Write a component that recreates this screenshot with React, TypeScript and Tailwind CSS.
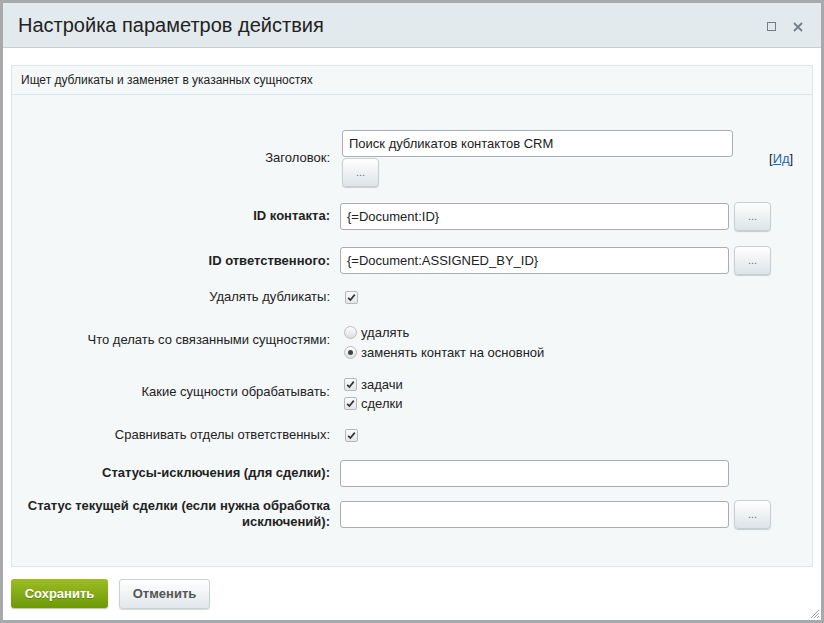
import React from "react";

const font = { fontFamily: '"Liberation Sans", Arial, sans-serif' };

function DotsButton() {
  return (
    <button
      type="button"
      className="h-[29px] w-[37px] shrink-0 rounded-[4px] border border-[#c6cfd3] bg-gradient-to-b from-[#ffffff] to-[#dde4e7] text-[11px] leading-none text-[#6b7378] shadow-[0_1px_1px_rgba(0,0,0,0.18)]"
    >
      ...
    </button>
  );
}

function TextInput({ value, width = "w-[389px]" }: { value?: string; width?: string }) {
  return (
    <div
      className={`h-[27px] ${width} shrink-0 rounded-[3px] border border-[#a9aeb1] bg-white pl-[6px] text-[13px] leading-[25px] text-[#222]`}
    >
      {value}
    </div>
  );
}

function Check() {
  return (
    <span className="inline-flex h-[13px] w-[13px] shrink-0 items-center justify-center rounded-[2px] border border-[#b5b9bc] bg-gradient-to-b from-[#fbfbfb] to-[#e4e6e7]">
      <svg width="9" height="9" viewBox="0 0 9 9">
        <path d="M1.2 4.8 L3.4 7 L7.8 1.6" fill="none" stroke="#333" strokeWidth="1.7" />
      </svg>
    </span>
  );
}

function Radio({ checked }: { checked?: boolean }) {
  return (
    <span className="inline-flex h-[13px] w-[13px] shrink-0 items-center justify-center rounded-full border border-[#b8bcbf] bg-gradient-to-b from-[#fdfdfd] to-[#dcdfe1]">
      {checked && <span className="h-[5px] w-[5px] rounded-full bg-[#444]" />}
    </span>
  );
}

function Row({
  label,
  bold,
  h,
  children,
}: {
  label: React.ReactNode;
  bold?: boolean;
  h: string;
  children: React.ReactNode;
}) {
  return (
    <div className={`flex ${h} items-center`}>
      <div
        className={`w-[319px] shrink-0 pr-[1px] text-right text-[13px] leading-[16px] text-[#222] ${bold ? "font-bold" : ""}`}
      >
        {label}
      </div>
      <div className="flex items-center gap-[5px] pl-[9px]">{children}</div>
    </div>
  );
}

export default function App() {
  return (
    <div
      style={font}
      className="relative flex h-[623px] w-[824px] flex-col border-[3px] border-[#a7a9ab] bg-white"
    >
      <div className="flex h-[45px] shrink-0 items-center justify-between border-b border-[#c9d0d4] bg-[#e3eaee] pl-[15px] pr-[18px]">
        <h1 className="text-[20px] leading-none text-[#222]">Настройка параметров действия</h1>
        <div className="flex items-center gap-[17px] pt-[3px]">
          <span className="block h-[9px] w-[9px] border-[1.5px] border-[#737f88]" />
          <svg width="10" height="10" viewBox="0 0 10 10">
            <path d="M1 1 L9 9 M9 1 L1 9" stroke="#737f88" strokeWidth="1.8" />
          </svg>
        </div>
      </div>

      <div className="mx-[8px] mt-[17px] h-[502px] border border-[#dbe5ea] bg-[#f5f8f9]">
        <div className="flex h-[29px] items-center border-b border-[#dbe5ea] pl-[9px] text-[12px] text-[#222]">
          Ищет дубликаты и заменяет в указанных сущностях
        </div>

        <div className="pt-[28px]">
          <div className="flex h-[70px] items-center">
            <div className="w-[319px] shrink-0 pr-[1px] text-right text-[13px] text-[#222]">Заголовок:</div>
            <div className="flex flex-col gap-[1px] pl-[11px]">
              <TextInput value="Поиск дубликатов контактов CRM" width="w-[391px]" />
              <DotsButton />
            </div>
            <div className="pl-[36px] pt-[2px] text-[13px] text-[#222]">
              [<span className="text-[#2067b0] underline">Ид</span>]
            </div>
          </div>

          <Row label="ID контакта:" bold h="h-[46px]">
            <TextInput value="{=Document:ID}" />
            <DotsButton />
          </Row>
          <Row label="ID ответственного:" bold h="h-[43px]">
            <TextInput value="{=Document:ASSIGNED_BY_ID}" />
            <DotsButton />
          </Row>
          <Row label="Удалять дубликаты:" h="h-[30px]">
            <span className="pl-[5px]">
              <Check />
            </span>
          </Row>
          <Row label="Что делать со связанными сущностями:" h="h-[56px]">
            <div className="mt-[5px] flex flex-col pl-[4px] text-[13px] leading-[20px] text-[#222]">
              <label className="flex items-center gap-[4px]">
                <Radio /> удалять
              </label>
              <label className="flex items-center gap-[4px]">
                <Radio checked /> заменять контакт на основной
              </label>
            </div>
          </Row>
          <Row label="Какие сущности обрабатывать:" h="h-[48px]">
            <div className="mt-[3px] flex flex-col pl-[4px] text-[13px] leading-[19px] text-[#222]">
              <label className="flex items-center gap-[4px]">
                <Check /> задачи
              </label>
              <label className="flex items-center gap-[4px]">
                <Check /> сделки
              </label>
            </div>
          </Row>
          <Row label="Сравнивать отделы ответственных:" h="h-[38px]">
            <span className="pl-[5px]">
              <Check />
            </span>
          </Row>
          <Row label="Статусы-исключения (для сделки):" bold h="h-[38px]">
            <TextInput />
          </Row>
          <Row
            label={
              <>
                Статус текущей сделки (если нужна обработка
                <br />
                исключений):
              </>
            }
            bold
            h="h-[44px]"
          >
            <TextInput />
            <DotsButton />
          </Row>
        </div>
      </div>

      <div className="flex gap-[11px] pl-[8px] pt-[12px]">
        <button
          type="button"
          className="h-[29px] w-[97px] rounded-[3px] bg-gradient-to-b from-[#9cbd23] to-[#6d9a06] text-[13px] font-bold text-white shadow-[0_1px_1px_rgba(0,0,0,0.25)] [text-shadow:0_1px_0_rgba(0,0,0,0.25)]"
        >
          Сохранить
        </button>
        <button
          type="button"
          className="h-[30px] w-[91px] rounded-[3px] border border-[#c9d1d5] bg-gradient-to-b from-[#ffffff] to-[#e1e7ea] text-[13px] font-bold text-[#555] shadow-[0_1px_1px_rgba(0,0,0,0.15)]"
        >
          Отменить
        </button>
      </div>

      <svg className="absolute bottom-[1px] right-[1px]" width="11" height="11" viewBox="0 0 11 11">
        <path d="M10 2 L2 10 M10 5 L5 10 M10 8 L8 10" stroke="#9a9ea1" strokeWidth="1" />
      </svg>
    </div>
  );
}
